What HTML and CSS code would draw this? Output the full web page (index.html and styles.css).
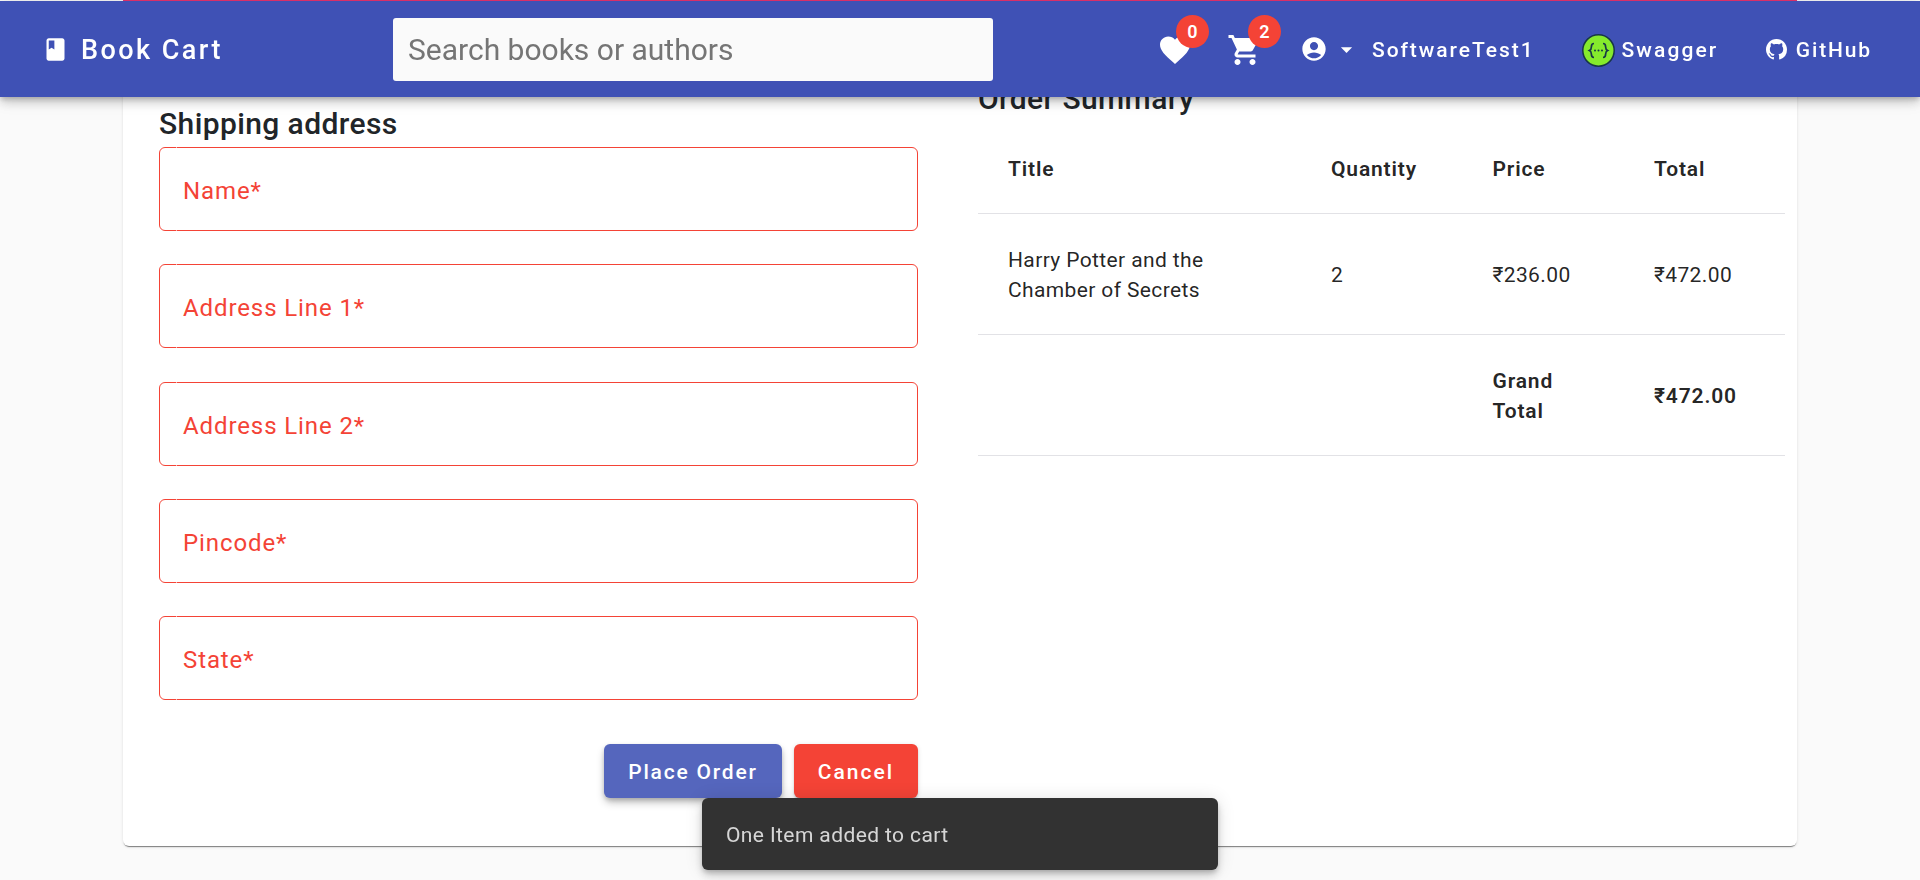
FILE: index.html
```html
<!DOCTYPE html>
<html lang="en">
<head>
<meta charset="utf-8">
<title>Book Cart</title>
<link rel="stylesheet" href="styles.css">
</head>
<body>
<header class="toolbar">
  <a class="brand">
    <svg class="brand-icon" viewBox="0 0 24 24"><path d="M18 2H6c-1.1 0-2 .9-2 2v16c0 1.1.9 2 2 2h12c1.1 0 2-.9 2-2V4c0-1.1-.9-2-2-2zM6 4h5v8l-2.5-1.5L6 12V4z"/></svg>
    <span class="brand-text">Book Cart</span>
  </a>
  <div class="search"><input class="search-input" placeholder="Search books or authors"></div>
  <nav class="nav">
    <a class="icon-btn heart">
      <svg viewBox="0 0 24 24"><path d="M12 21.35l-1.45-1.32C5.4 15.36 2 12.28 2 8.5 2 5.42 4.42 3 7.5 3c1.74 0 3.41.81 4.5 2.09C13.09 3.81 14.76 3 16.5 3 19.58 3 22 5.42 22 8.5c0 3.78-3.4 6.86-8.55 11.54L12 21.35z"/></svg>
      <span class="badge">0</span>
    </a>
    <a class="icon-btn cart">
      <svg viewBox="0 0 24 24"><path d="M7 18c-1.1 0-1.99.9-1.99 2S5.9 22 7 22s2-.9 2-2-.9-2-2-2zM1 2v2h2l3.6 7.59-1.35 2.45c-.16.28-.25.61-.25.96 0 1.1.9 2 2 2h12v-2H7.42c-.14 0-.25-.11-.25-.25l.03-.12.9-1.63h7.45c.75 0 1.41-.41 1.75-1.03l3.58-6.47c.08-.14.12-.31.12-.48 0-.55-.45-1-1-1H5.21l-.94-2H1zm16 16c-1.1 0-1.99.9-1.99 2s.89 2 1.99 2 2-.9 2-2-.9-2-2-2z"/></svg>
      <span class="badge">2</span>
    </a>
    <a class="user">
      <svg class="user-icon" viewBox="0 0 24 24"><path d="M12 2C6.48 2 2 6.48 2 12s4.48 10 10 10 10-4.48 10-10S17.52 2 12 2zm0 4c1.93 0 3.5 1.57 3.5 3.5S13.93 13 12 13s-3.5-1.57-3.5-3.5S10.07 6 12 6zm0 14c-2.03 0-4.43-.82-6.14-2.88C7.55 15.8 9.68 15 12 15s4.45.8 6.14 2.12C16.43 19.18 14.03 20 12 20z"/></svg>
      <svg class="caret" viewBox="0 0 24 24"><path d="M7 10l5 5 5-5z"/></svg>
      <span class="nav-text user-name">SoftwareTest1</span>
    </a>
    <a class="link swagger">
      <svg class="swagger-logo" viewBox="0 0 33 33">
        <circle cx="16.5" cy="16.5" r="15.7" fill="#85ea2d" stroke="#173647" stroke-width="1.5"/>
        <path d="M12 9.5c-2.6 0-2.6 1.4-2.6 3.2 0 1.9-.3 3-2 3.8 1.7.8 2 1.9 2 3.8 0 1.8 0 3.2 2.6 3.2M21 9.5c2.6 0 2.6 1.4 2.6 3.2 0 1.9.3 3 2 3.8-1.7.8-2 1.9-2 3.8 0 1.8 0 3.2-2.6 3.2" fill="none" stroke="#173647" stroke-width="1.7"/>
        <circle cx="13" cy="16.5" r="1" fill="#173647"/><circle cx="16.5" cy="16.5" r="1" fill="#173647"/><circle cx="20" cy="16.5" r="1" fill="#173647"/>
      </svg>
      <span class="nav-text swagger-text">Swagger</span>
    </a>
    <a class="link github">
      <svg class="github-logo" viewBox="0 0 16 16"><path d="M8 0C3.58 0 0 3.58 0 8c0 3.54 2.29 6.53 5.47 7.59.4.07.55-.17.55-.38 0-.19-.01-.82-.01-1.49-2.01.37-2.53-.49-2.69-.94-.09-.23-.48-.94-.82-1.13-.28-.15-.68-.52-.01-.53.63-.01 1.08.58 1.23.82.72 1.21 1.87.87 2.33.66.07-.52.28-.87.51-1.07-1.78-.2-3.64-.89-3.64-3.95 0-.87.31-1.59.82-2.15-.08-.2-.36-1.02.08-2.12 0 0 .67-.21 2.2.82.64-.18 1.32-.27 2-.27.68 0 1.36.09 2 .27 1.53-1.04 2.2-.82 2.2-.82.44 1.1.16 1.92.08 2.12.51.56.82 1.27.82 2.15 0 3.07-1.87 3.75-3.65 3.95.29.25.54.73.54 1.48 0 1.07-.01 1.93-.01 2.2 0 .21.15.46.55.38A8.013 8.013 0 0016 8c0-4.42-3.58-8-8-8z"/></svg>
      <span class="nav-text">GitHub</span>
    </a>
  </nav>
</header>

<main class="card">
  <section class="shipping">
    <h2 class="title">Shipping address</h2>
    <form class="form">
      <label class="field"><span class="field-label">Name*</span></label>
      <label class="field"><span class="field-label">Address Line 1*</span></label>
      <label class="field"><span class="field-label">Address Line 2*</span></label>
      <label class="field"><span class="field-label">Pincode*</span></label>
      <label class="field"><span class="field-label">State*</span></label>
      <div class="actions">
        <button type="button" class="btn btn-primary">Place Order</button>
        <button type="button" class="btn btn-warn">Cancel</button>
      </div>
    </form>
  </section>
  <section class="summary">
    <h2 class="title">Order Summary</h2>
    <table class="table">
      <colgroup><col class="col-title"><col class="col-qty"><col class="col-price"><col class="col-total"></colgroup>
      <thead>
        <tr><th>Title</th><th>Quantity</th><th>Price</th><th>Total</th></tr>
      </thead>
      <tbody>
        <tr><td>Harry Potter and the Chamber of Secrets</td><td>2</td><td>₹236.00</td><td>₹472.00</td></tr>
        <tr class="grand"><td></td><td></td><td>Grand Total</td><td>₹472.00</td></tr>
      </tbody>
    </table>
  </section>
</main>

<div class="snackbar">One Item added to cart</div>
</body>
</html>
```
FILE: styles.css
```css
* { box-sizing: border-box; }
html, body { margin: 0; padding: 0; }
body {
  min-height: 880px;
  background: #fafafa;
  font-family: Roboto, "Noto Sans", sans-serif;
  color: rgba(0, 0, 0, .87);
  font-size: 21px;
}

/* toolbar */
.toolbar {
  position: fixed;
  top: 1px;
  left: 0;
  right: 0;
  height: 96px;
  z-index: 10;
  display: flex;
  align-items: center;
  padding: 0 48px 0 42px;
  background: #3f51b5;
  color: #fff;
  box-shadow: 0 3px 5px -1px rgba(0,0,0,.2), 0 6px 10px rgba(0,0,0,.14), 0 1px 18px rgba(0,0,0,.12);
}
.toolbar svg { display: block; fill: currentColor; flex: none; }
.brand {
  width: 351px;
  display: flex;
  align-items: center;
  gap: 12px;
  font-size: 27px;
  font-weight: 500;
  letter-spacing: 2.45px;
}
.brand-text { padding-top: 2px; }
.brand-icon { width: 27px; height: 27px; }
.search { width: 600px; height: 63px; }
.search-input {
  display: block;
  width: 100%;
  height: 100%;
  border: 0;
  outline: 0;
  border-radius: 3px;
  padding: 0 15px;
  background: #fafafa;
  font-family: inherit;
  font-size: 30px;
  color: #495057;
}
.search-input::placeholder { color: #757575; opacity: 1; }
.nav { margin-left: auto; display: flex; align-items: center; }
.icon-btn { position: relative; width: 36px; height: 36px; margin-top: 2px; }
.icon-btn svg { width: 36px; height: 36px; }
.cart { margin-left: 34.5px; }
.badge {
  position: absolute;
  top: -17px;
  left: 19px;
  width: 33px;
  height: 33px;
  border-radius: 50%;
  background: #f44336;
  color: #fff;
  font-size: 18px;
  font-weight: 600;
  line-height: 33px;
  text-align: center;
}
.cart .badge { left: 20.5px; }
.nav-text { padding-top: 2px; font-size: 21px; font-weight: 500; letter-spacing: 1.85px; white-space: nowrap; }
.user-name { letter-spacing: 1.95px; }
.swagger-text { letter-spacing: 2.1px; }
.user { display: flex; align-items: center; margin-left: 36.5px; }
.user-icon { width: 28px; height: 28px; }
.caret { width: 27px; height: 27px; margin: 0 12px 0 5px; }
.link { display: flex; align-items: center; margin-left: 47.5px; }
.swagger-logo { width: 33px; height: 33px; margin: 2px 6.5px 0 0; }
.github-logo { width: 21px; height: 21px; margin-right: 9px; }

/* card */
.card {
  margin: 0 123px;
  height: 846px;
  display: grid;
  grid-template-columns: 759px 807px;
  column-gap: 60px;
  padding: 0 0 48px 36px;
  background: #fff;
  border-top: 1px solid #e8336f;
  border-radius: 0 0 6px 6px;
  box-shadow: 0 2px 1px -1px rgba(0,0,0,.45), 0 1px 3px rgba(0,0,0,.12);
}
.title {
  margin: 0;
  font-size: 30px;
  font-weight: 500;
  line-height: 36px;
  letter-spacing: .4px;
  color: #212529;
}
.shipping { padding-top: 105px; }
.summary { padding-top: 80px; }
.form { display: flex; flex-direction: column; margin-top: 5px; }
.field {
  position: relative;
  display: flex;
  align-items: center;
  height: 84px;
  margin-bottom: 33.25px;
  padding: 4px 23px 0;
  border: 1.5px solid #f44336;
  border-radius: 6px;
  color: #f44336;
}
.field::before {
  content: "";
  position: absolute;
  top: -2px;
  bottom: -2px;
  left: 16px;
  width: 1px;
  border: solid rgba(255,255,255,.6);
  border-width: 2px 0;
}
.field-label { font-size: 24px; letter-spacing: .9px; }
.actions { display: flex; justify-content: flex-end; gap: 12px; margin-top: 11px; }
.btn {
  height: 54px;
  padding: 2px 24px 0;
  border: 0;
  border-radius: 6px;
  color: #fff;
  font-family: inherit;
  font-size: 21px;
  font-weight: 500;
  letter-spacing: 2px;
  box-shadow: 0 3px 1px -2px rgba(0,0,0,.2), 0 2px 2px rgba(0,0,0,.14), 0 1px 5px rgba(0,0,0,.12);
}
.btn-primary { background: #5566bd; letter-spacing: 1.8px; box-shadow: 0 5px 8px -1px rgba(0,0,0,.28), 0 2px 4px rgba(0,0,0,.14); }
.btn-warn { background: #f44336; }

/* table */
.table {
  width: 807px;
  margin-top: 6px;
  table-layout: fixed;
  border-collapse: collapse;
  font-size: 21px;
  letter-spacing: .38px;
}
.col-title { width: 353px; }
.col-qty { width: 161.5px; }
.col-price { width: 161.5px; }
.col-total { width: 131px; }
.table th, .table td {
  padding: 2px 60px 0 0;
  text-align: left;
  line-height: 30px;
  border-bottom: 1.5px solid #e2e2e6;
  color: rgba(0,0,0,.87);
}
.table th { height: 90px; font-weight: 600; letter-spacing: .85px; }
.table td { height: 121px; font-weight: 400; }
.table th:first-child, .table td:first-child { padding: 2px 90px 0 30px; }
.table th:last-child, .table td:last-child { padding-right: 0; }
.grand td { font-weight: 600; letter-spacing: .85px; }

/* snackbar */
.snackbar {
  position: fixed;
  left: 702px;
  bottom: 10px;
  width: 516px;
  height: 72px;
  display: flex;
  align-items: center;
  padding: 2px 24px 0;
  border-radius: 6px;
  background: #323232;
  color: rgba(255,255,255,.8);
  font-size: 21px;
  letter-spacing: .4px;
  box-shadow: 0 3px 5px -1px rgba(0,0,0,.2), 0 6px 10px rgba(0,0,0,.14), 0 1px 18px rgba(0,0,0,.12);
  z-index: 20;
}
```
